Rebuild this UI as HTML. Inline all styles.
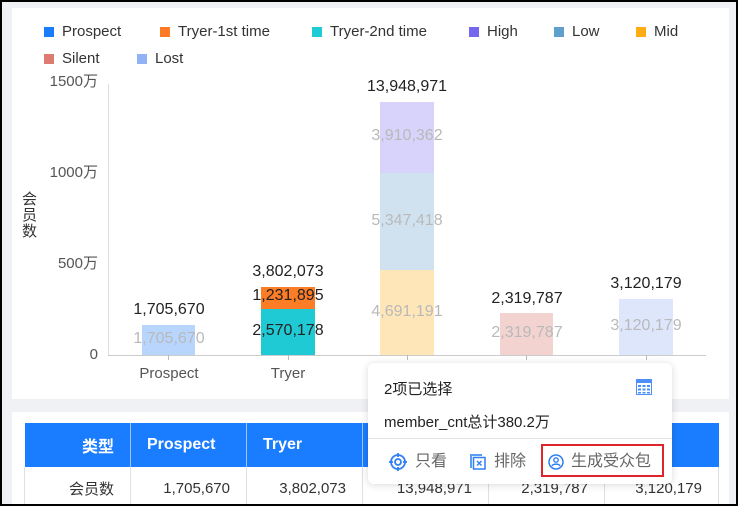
<!DOCTYPE html>
<html><head><meta charset="utf-8"><style>
*{margin:0;padding:0;box-sizing:border-box}
body{width:738px;height:506px;overflow:hidden;background:#000;font-family:"Liberation Sans","Noto Sans CJK SC",sans-serif;position:relative}
#frame{position:absolute;left:2px;top:2px;width:734px;height:502px;background:#f0f1f5;overflow:hidden}
.abs{position:absolute}
.panel{position:absolute;background:#fff}
.lg{position:absolute;font-size:15px;color:#333;line-height:18px}
.lg i{position:absolute;left:-18px;top:4px;width:10px;height:10px}
.t{position:absolute;font-size:16px;color:#222;white-space:nowrap;transform:translateX(-50%);line-height:18px}
.g{color:#b9b9b9}
.ax{position:absolute;font-size:15px;color:#555;text-align:right;width:90px;line-height:16px}
th,td{border-right:1px solid #dcdfe6;vertical-align:middle}
.tt{position:absolute;font-size:16px;color:#666;line-height:18px}
</style></head><body>
<div id="frame">
<div class="panel" style="left:10px;top:6px;width:717px;height:391px"></div>
<div class="panel" style="left:10px;top:410px;width:717px;height:100px"></div>

<div class="lg" style="left:60px;top:21px"><i style="background:#1a7dfd"></i>Prospect</div>
<div class="lg" style="left:176px;top:21px"><i style="background:#fd7a24"></i>Tryer-1st time</div>
<div class="lg" style="left:328px;top:21px"><i style="background:#1ecbd4"></i>Tryer-2nd time</div>
<div class="lg" style="left:485px;top:21px"><i style="background:#7566f0"></i>High</div>
<div class="lg" style="left:570px;top:21px"><i style="background:#5f9fcc"></i>Low</div>
<div class="lg" style="left:652px;top:21px"><i style="background:#ffac12"></i>Mid</div>
<div class="lg" style="left:60px;top:48px"><i style="background:#dd7a72"></i>Silent</div>
<div class="lg" style="left:153px;top:48px"><i style="background:#92b2f8"></i>Lost</div>

<div class="ax" style="left:6px;top:72px">1500万</div>
<div class="ax" style="left:6px;top:163px">1000万</div>
<div class="ax" style="left:6px;top:254px">500万</div>
<div class="ax" style="left:6px;top:345px">0</div>
<div class="abs" style="left:20px;top:190px;width:16px;font-size:15px;color:#333;line-height:16px">会员数</div>
<div class="abs" style="left:106px;top:82px;width:1px;height:272px;background:#ddd"></div>
<div class="abs" style="left:106px;top:353px;width:598px;height:1px;background:#ccc"></div>
<div class="abs" style="left:166px;top:353px;width:1px;height:5px;background:#bbb"></div>
<div class="abs" style="left:286px;top:353px;width:1px;height:5px;background:#bbb"></div>
<div class="abs" style="left:405px;top:353px;width:1px;height:5px;background:#bbb"></div>
<div class="abs" style="left:524px;top:353px;width:1px;height:5px;background:#bbb"></div>
<div class="abs" style="left:644px;top:353px;width:1px;height:5px;background:#bbb"></div>

<div class="abs" style="left:140px;top:323px;width:53px;height:30px;background:#b8d6fd"></div>
<div class="abs" style="left:259px;top:285px;width:54px;height:22px;background:#fd7c26"></div>
<div class="abs" style="left:259px;top:307px;width:54px;height:46px;background:#20cad4"></div>
<div class="abs" style="left:378px;top:100px;width:54px;height:71px;background:#d7d3fb"></div>
<div class="abs" style="left:378px;top:171px;width:54px;height:97px;background:#d0e2ef"></div>
<div class="abs" style="left:378px;top:268px;width:54px;height:85px;background:#ffe6b8"></div>
<div class="abs" style="left:498px;top:311px;width:53px;height:42px;background:#f2d3d0"></div>
<div class="abs" style="left:617px;top:297px;width:54px;height:56px;background:#dde6fb"></div>

<div class="t" style="left:167px;top:299px">1,705,670</div>
<div class="t g" style="left:167px;top:328px">1,705,670</div>
<div class="t" style="left:286px;top:261px">3,802,073</div>
<div class="t" style="left:286px;top:285px">1,231,895</div>
<div class="t" style="left:286px;top:320px">2,570,178</div>
<div class="t" style="left:405px;top:76px">13,948,971</div>
<div class="t g" style="left:405px;top:125px">3,910,362</div>
<div class="t g" style="left:405px;top:210px">5,347,418</div>
<div class="t g" style="left:405px;top:301px">4,691,191</div>
<div class="t" style="left:525px;top:288px">2,319,787</div>
<div class="t g" style="left:525px;top:322px">2,319,787</div>
<div class="t" style="left:644px;top:273px">3,120,179</div>
<div class="t g" style="left:644px;top:315px">3,120,179</div>
<div class="t" style="left:167px;top:363px;color:#555;font-size:15px">Prospect</div>
<div class="t" style="left:286px;top:363px;color:#555;font-size:15px">Tryer</div>

<table class="abs" style="left:22px;top:421px;width:694px;border-collapse:collapse;font-size:15px;table-layout:fixed">
<colgroup><col style="width:106px"><col style="width:116px"><col style="width:116px"><col style="width:126px"><col style="width:116px"><col style="width:114px"></colgroup>
<tr style="background:#1a7dff;color:#fff;height:44px;font-weight:bold;font-size:16px">
<th style="text-align:right;padding-right:16px;border-color:#9fc5fb">类型</th><th style="text-align:left;padding-left:16px;border-color:#9fc5fb">Prospect</th><th style="text-align:left;padding-left:16px;border-color:#9fc5fb">Tryer</th><th></th><th></th><th style="border:none"></th></tr>
<tr style="height:42px;color:#333;text-align:right">
<td style="padding-right:16px;border-left:1px solid #dcdfe6">会员数</td><td style="padding-right:16px">1,705,670</td><td style="padding-right:16px">3,802,073</td><td style="padding-right:16px">13,948,971</td><td style="padding-right:16px">2,319,787</td><td style="padding-right:16px">3,120,179</td></tr>
</table>

<div class="abs" style="left:366px;top:361px;width:304px;height:121px;background:#fff;border-radius:6px;box-shadow:0 1px 8px rgba(0,0,0,.15)">
<div class="abs" style="left:16px;top:18px;font-size:15px;color:#222;line-height:18px">2项已选择</div>
<div class="abs" style="left:16px;top:51px;font-size:15px;color:#222;line-height:18px">member_cnt总计380.2万</div>
<svg class="abs" style="left:268px;top:16px" width="16" height="16" viewBox="0 0 16 16"><rect x="0.5" y="0.5" width="15" height="15" fill="#fff" stroke="#4b8ff7"/><rect x="0" y="0" width="16" height="4" fill="#4b8ff7"/><g fill="#4b8ff7"><rect x="2" y="6" width="3" height="2"/><rect x="6.5" y="6" width="3" height="2"/><rect x="11" y="6" width="3" height="2"/><rect x="2" y="9.5" width="3" height="2"/><rect x="6.5" y="9.5" width="3" height="2"/><rect x="11" y="9.5" width="3" height="2"/><rect x="2" y="13" width="3" height="1.5"/><rect x="6.5" y="13" width="3" height="1.5"/><rect x="11" y="13" width="3" height="1.5"/></g></svg>
<div class="abs" style="left:0;top:75px;width:304px;height:1px;background:#e5e5e5"></div>
<svg class="abs" style="left:21px;top:90px" width="18" height="18" viewBox="0 0 18 18"><circle cx="9" cy="9" r="7" fill="none" stroke="#2f7ff5" stroke-width="1.8"/><circle cx="9" cy="9" r="3" fill="none" stroke="#2f7ff5" stroke-width="1.8"/><path d="M9 0v4M9 14v4M0 9h4M14 9h4" stroke="#2f7ff5" stroke-width="1.8"/></svg>
<div class="tt" style="left:47px;top:90px">只看</div>
<svg class="abs" style="left:101px;top:90px" width="17" height="17" viewBox="0 0 17 17"><path d="M1 1h12v2H3v12H1z" fill="#5b9cf7"/><rect x="4.5" y="4.5" width="11.5" height="11.5" fill="none" stroke="#2f7ff5" stroke-width="1.5"/><path d="M8 8l4.5 4.5M12.5 8L8 12.5" stroke="#2f7ff5" stroke-width="1.4"/></svg>
<div class="tt" style="left:126px;top:90px">排除</div>
<div class="abs" style="left:173px;top:81px;width:123px;height:33px;border:2px solid #e0242b"></div>
<svg class="abs" style="left:180px;top:91px" width="16" height="16" viewBox="0 0 16 16"><circle cx="8" cy="8" r="7" fill="none" stroke="#2f7ff5" stroke-width="1.5"/><circle cx="8" cy="6" r="2.2" fill="none" stroke="#2f7ff5" stroke-width="1.4"/><path d="M4 12c1-2.5 7-2.5 8 0" fill="none" stroke="#2f7ff5" stroke-width="1.4"/></svg>
<div class="tt" style="left:203px;top:90px">生成受众包</div>
</div>
</div>
</body></html>
